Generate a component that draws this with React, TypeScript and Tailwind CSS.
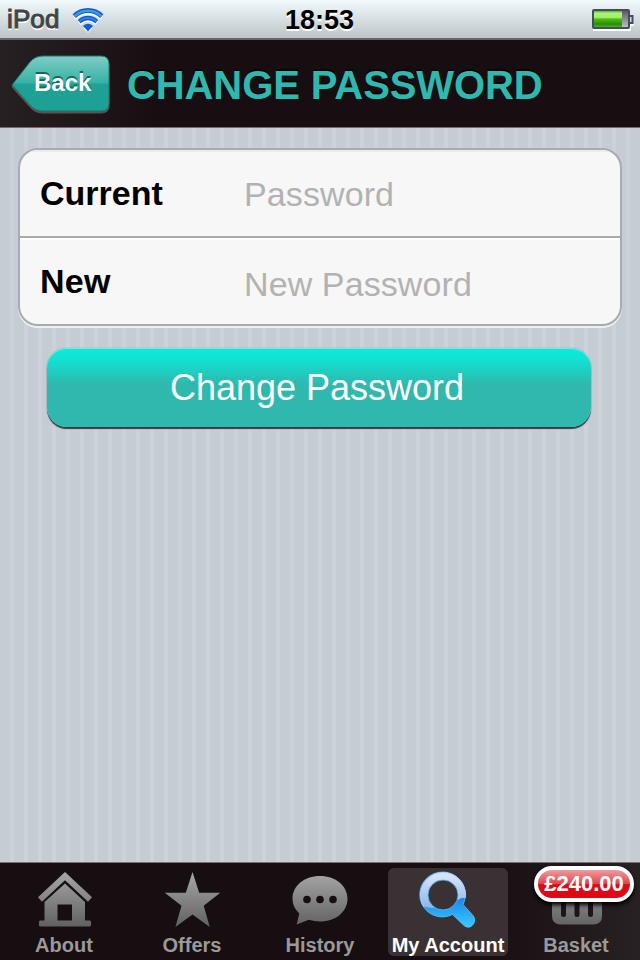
import type { ReactNode } from 'react';

function WifiIcon() {
  return (
    <svg width="34" height="26" viewBox="0 0 34 26">
      <defs>
        <clipPath id="fan">
          <path d="M17 24.4 L-1 4.5 L4 -4 H30 L35 4.5 Z" />
        </clipPath>
      </defs>
      <g clipPath="url(#fan)" fill="none" transform="translate(0 1.5)" stroke="#fff" strokeWidth="4.6">
        <circle cx="17" cy="23" r="19.2" />
        <circle cx="17" cy="23" r="12" />
        <circle cx="17" cy="23" r="3" />
      </g>
      <g clipPath="url(#fan)" fill="none">
        <circle cx="17" cy="23" r="19.5" stroke="#1b58cd" strokeWidth="5" />
        <circle cx="17" cy="23" r="19.3" stroke="#389bea" strokeWidth="2.6" />
        <circle cx="17" cy="23" r="12" stroke="#1453d7" strokeWidth="4.4" />
        <circle cx="17" cy="23" r="12" stroke="#2688ec" strokeWidth="2.2" />
        <circle cx="17" cy="23" r="6.3" fill="#155cdc" />
      </g>
    </svg>
  );
}

function BatteryIcon() {
  return (
    <svg width="43" height="23" viewBox="0 0 43 23">
      <defs>
        <linearGradient id="charge" x1="0" y1="0" x2="0" y2="1">
          <stop offset="0" stopColor="#55b51e" />
          <stop offset=".14" stopColor="#aaf477" />
          <stop offset=".4" stopColor="#a5ee64" />
          <stop offset=".5" stopColor="#50bd19" />
          <stop offset=".82" stopColor="#288c08" />
          <stop offset="1" stopColor="#52b21b" />
        </linearGradient>
        <linearGradient id="empty" x1="0" y1="0" x2="0" y2="1">
          <stop offset="0" stopColor="#555" />
          <stop offset="1" stopColor="#c4c4c4" />
        </linearGradient>
      </defs>
      <path d="M1 21H38V16H42" stroke="#fff" strokeWidth="2" fill="none" />
      <rect x="1" y="1" width="36" height="18" rx="1" fill="url(#empty)" stroke="#474b60" strokeWidth="2" />
      <rect x="2" y="2" width="28" height="16" fill="url(#charge)" />
      <path d="M38 7H40.5V14H38" fill="none" stroke="#474b60" strokeWidth="2" />
    </svg>
  );
}

function BackShape() {
  return (
    <svg className="absolute inset-0" width="101" height="61" viewBox="0 0 101 61">
      <defs>
        <linearGradient id="back" x1="0" y1="0" x2="0" y2="1">
          <stop offset="0" stopColor="#80cdc5" />
          <stop offset=".49" stopColor="#36b1a5" />
          <stop offset=".51" stopColor="#1fa195" />
          <stop offset="1" stopColor="#1da194" />
        </linearGradient>
      </defs>
      <path d="M2 32 L20 9 Q25 3 33 3 H91 Q99 3 99 10 V51 Q99 58 91 58 H33 Q25 58 20 52 Z" fill="#62514f" stroke="#62514f" strokeWidth="1" />
      <path d="M2 30 L20 7 Q25 1 33 1 H91 Q99 1 99 9 V48 Q99 56 91 56 H33 Q25 56 20 50 Z" fill="url(#back)" stroke="#16776e" strokeWidth="1" />
    </svg>
  );
}

function GreyGradient() {
  return (
    <svg className="absolute" width="0" height="0">
      <defs>
        <linearGradient id="grey" gradientUnits="userSpaceOnUse" x1="0" y1="0" x2="0" y2="58">
          <stop offset="0" stopColor="#aaaaaa" />
          <stop offset="1" stopColor="#5f5f5f" />
        </linearGradient>
      </defs>
    </svg>
  );
}

function HomeIcon() {
  return (
    <svg width="60" height="60" viewBox="0 0 60 60" fill="url(#grey)">
      <path d="M31 2 L58 27.2 L54 31.7 L31 10.3 L8 31.7 L4 27.2 Z" />
      <path fillRule="evenodd" d="M31 13.5 L51 32 V50.5 H56 Q57 50.5 57 52 V55 Q57 56.5 55.5 56.5 H6.5 Q5 56.5 5 55 V52 Q5 50.5 6 50.5 H10.5 V32 Z M23.5 34.5 V50.5 H38 V34.5 Z" />
    </svg>
  );
}

function StarIcon() {
  return (
    <svg width="60" height="60" viewBox="0 0 60 60" fill="url(#grey)">
      <path d="M30.5 2 L37.2 22.7 H58.3 L41.7 35.8 L47.8 57 L30.5 44.5 L13.4 57 L19.5 35.8 L2.8 22.7 H23.8 Z" />
    </svg>
  );
}

function ChatIcon() {
  return (
    <svg width="60" height="60" viewBox="0 0 60 60" fill="url(#grey)">
      <path d="M30 6 C46 6 57.5 16 57.5 28.7 S46 51.5 30 51.5 Q24 51.5 18.8 49.7 L6.7 54.5 L9.3 43.5 Q2.5 37 2.5 28.7 C2.5 16 14 6 30 6 Z" />
      <g fill="#170e11">
        <circle cx="17" cy="29.5" r="3.8" />
        <circle cx="30" cy="29.5" r="3.8" />
        <circle cx="43" cy="29.5" r="3.8" />
      </g>
    </svg>
  );
}

function SearchIcon() {
  return (
    <svg width="60" height="60" viewBox="0 0 60 60">
      <defs>
        <linearGradient id="lensTop" x1="0" y1="0" x2="0" y2="1">
          <stop offset="0" stopColor="#d7e3f8" />
          <stop offset="1" stopColor="#7fabe8" />
        </linearGradient>
        <linearGradient id="lensBase" x1="0" y1="0" x2="0" y2="1">
          <stop offset=".45" stopColor="#1684ef" />
          <stop offset="1" stopColor="#3cc9ff" />
        </linearGradient>
        <clipPath id="lensGloss">
          <path d="M0 0H60V27L44 28Q38 30 32 36Q20 41 0 35Z" />
        </clipPath>
      </defs>
      <path fillRule="evenodd" fill="url(#lensBase)" stroke="#55c7f7" strokeWidth=".8" d="M25 2 A22.5 22.5 0 0 1 45 34.5 L55 45.5 Q58 49 56 53 Q52.500 59.500 46.500 56 L34.500 44.500 A22.5 22.5 0 1 1 25 2 Z M25 10 A15 15 0 1 0 25 40 A15 15 0 1 0 25 10 Z" />
      <circle cx="25" cy="25" r="19" fill="none" stroke="url(#lensTop)" strokeWidth="7.5" clipPath="url(#lensGloss)" />
      <circle cx="25" cy="25" r="22.5" fill="none" stroke="#afd6ff" strokeWidth=".8" clipPath="url(#lensGloss)" />
    </svg>
  );
}

function BasketIcon() {
  return (
    <svg width="60" height="60" viewBox="0 0 60 60">
      <path d="M6 20 H56 V46 Q56 54.5 47 54.5 H15 Q6 54.5 6 46 Z" fill="url(#grey)" />
      <g stroke="#1d1618" strokeWidth="5" strokeLinecap="round">
        <path d="M17.5 28V44.5" />
        <path d="M31 28V44.5" />
        <path d="M44.5 28V44.5" />
      </g>
    </svg>
  );
}

function Tab({ icon, label, active, children }: { icon: ReactNode; label: string; active?: boolean; children?: ReactNode }) {
  return (
    <div className="relative flex w-32 justify-center pt-[5px]">
      <div className={`flex h-[88px] w-[120px] flex-col items-center rounded-md pt-[2px] [&>svg]:shrink-0 ${active ? 'bg-[#393134] text-white' : 'text-[#9b999a]'}`}>
        {icon}
        <span className="mt-[3px] shrink-0 whitespace-nowrap text-[20px] font-bold leading-6">{label}</span>
      </div>
      {children}
    </div>
  );
}

export default function App() {
  return (
    <div className="flex h-[960px] w-[640px] flex-col overflow-hidden bg-[#170e11] font-['Liberation_Sans',Arial,sans-serif]">
      <GreyGradient />
      <div className="grid h-10 grid-cols-3 items-start border-b-2 border-[#62686c] bg-linear-to-b from-[#f1fafd] to-[#bec5c8]">
        <div className="flex pl-[7px] pt-[3px]">
          <span className="w-[64px] text-[26px] font-normal leading-8 tracking-[0.1px] text-[#434343] [-webkit-text-stroke:1px_#434343] [text-shadow:0_2px_0_#fff]">iPod</span>
          <div className="pt-[4px]"><WifiIcon /></div>
        </div>
        <span className="pr-px pt-[4px] text-center text-[27px] font-bold leading-8 text-black [text-shadow:0_2px_0_#fff]">18:53</span>
        <div className="flex justify-end pr-[5px] pt-[9px]"><BatteryIcon /></div>
      </div>

      <div className="flex h-[88px] items-start border-b border-[#77696d] bg-linear-to-r from-[#272022] via-[#170e11] via-25% to-[#170e11]">
        <div className="relative ml-[10px] mt-[15px] h-[61px] w-[101px]">
          <BackShape />
          <span className="relative block pl-[24px] pt-[12px] text-[24px] font-bold leading-8 text-white [text-shadow:0_-2px_0_#17675f]">Back</span>
        </div>
        <h1 className="ml-4 mt-[21px] whitespace-nowrap text-[40px] font-bold leading-[48px] tracking-[-0.1px] text-[#2fb8ae] [text-shadow:0_-2px_0_#090506]">CHANGE PASSWORD</h1>
      </div>

      <main className="h-[734px] bg-[repeating-linear-gradient(to_right,#c5ccd4_0px,#c5ccd4_10px,#cbd2d9_10px,#cbd2d9_14px)] pl-[18px] pt-5">
        <div className="h-[178px] w-[604px] overflow-hidden rounded-[20px] border-2 border-[#a9aaab] bg-[#f7f7f7] shadow-[0_2px_0_#eef0f2]">
          <div className="flex h-[88px] items-center border-b-2 border-[#a9aaab] pl-5 shadow-[inset_0_2px_0_#ececec]">
            <label className="w-[204px] pb-px text-[34px] font-bold leading-10 text-black">Current</label>
            <span className="pt-[2px] text-[34px] leading-10 tracking-[0.1px] text-[#b2b2b2]">Password</span>
          </div>
          <div className="flex h-[86px] items-center border-t-2 border-white pl-5">
            <label className="w-[204px] pb-[2px] text-[34px] font-bold leading-10 tracking-[0.3px] text-black">New</label>
            <span className="pt-[4px] text-[34px] leading-10 tracking-[0.1px] text-[#b2b2b2]">New Password</span>
          </div>
        </div>
        <button className="ml-[29px] mt-[22px] block h-[79px] w-[544px] rounded-[20px] bg-[linear-gradient(#0beadb_0%,#10e4d6_12%,#2fb8ae_46%,#2fb8ae_100%)] pr-[4px] text-[36px] text-white shadow-[inset_0_1px_0_#69eee3,0_1.5px_1px_#313b40,0_0_1px_#70858a]">Change Password</button>
      </main>

      <nav className="flex h-[98px] border-t border-[#777174] bg-linear-to-r from-[#170e11] via-[#170e11] via-75% to-[#282123]">
        <Tab icon={<HomeIcon />} label="About" />
        <Tab icon={<StarIcon />} label="Offers" />
        <Tab icon={<ChatIcon />} label="History" />
        <Tab icon={<SearchIcon />} label="My Account" active />
        <Tab icon={<BasketIcon />} label="Basket">
          <div className="absolute left-[22px] top-[3px] flex h-9 w-[100px] items-center justify-center rounded-full border-4 border-white bg-[linear-gradient(#ef9ca0_0%,#df434b_50%,#d80d18_52%,#df0712_100%)] pb-px text-[22px] font-bold text-white shadow-[0_3px_4px_#000]">£240.00</div>
        </Tab>
      </nav>
    </div>
  );
}
